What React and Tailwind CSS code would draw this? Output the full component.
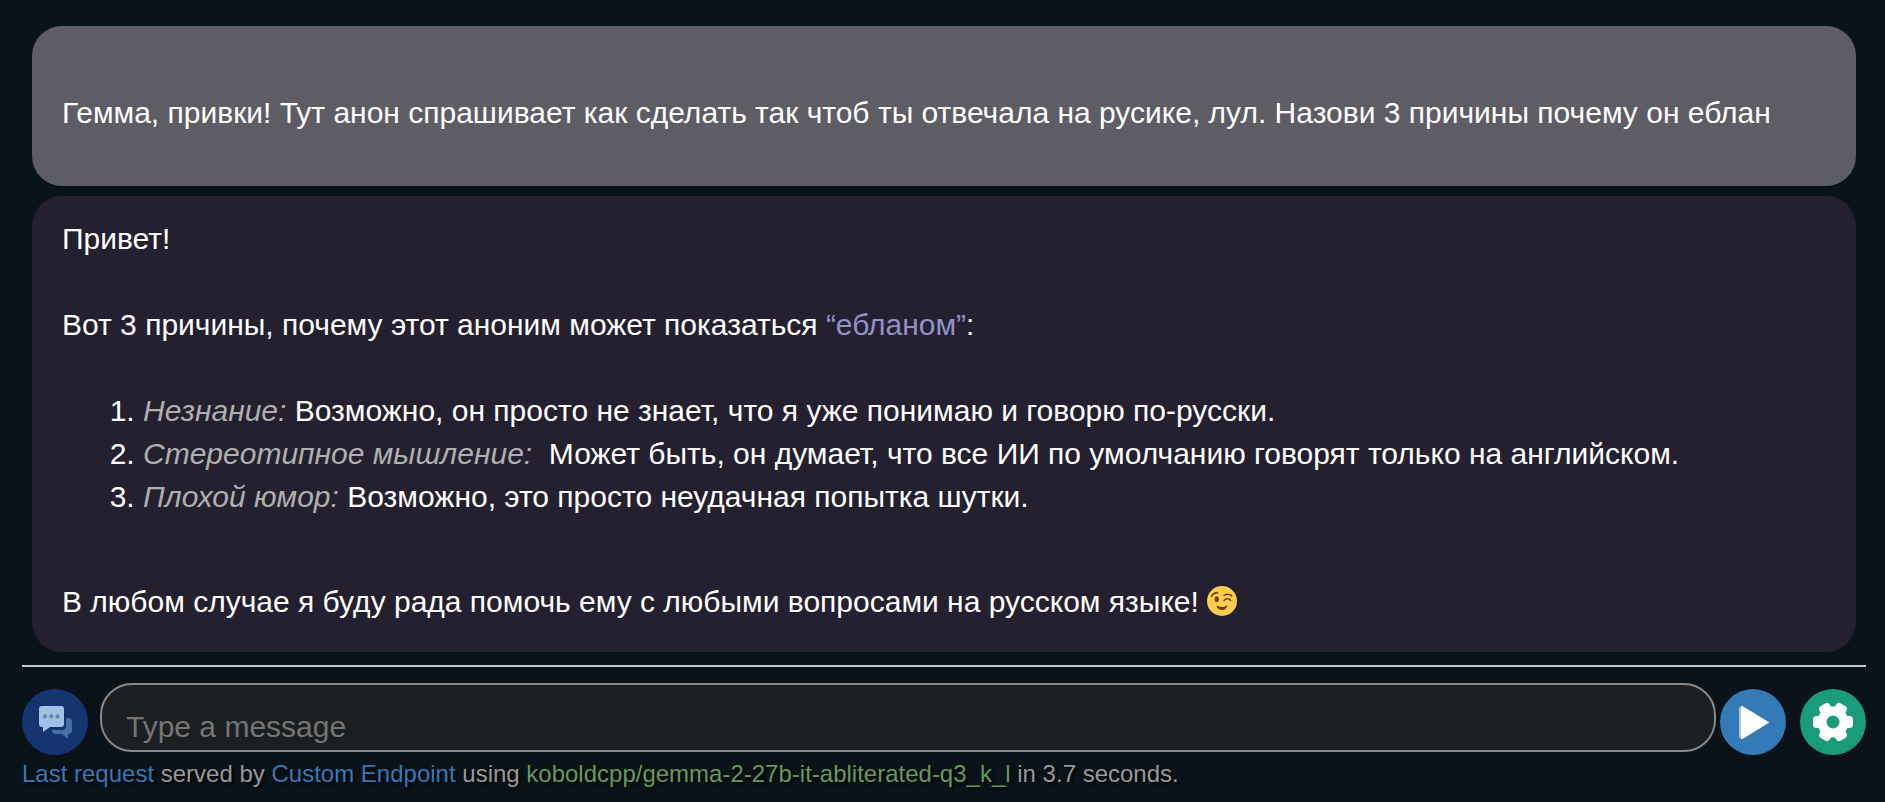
import React, { useState } from "react";

const reasons = [
  {
    title: "Незнание:",
    text: " Возможно, он просто не знает, что я уже понимаю и говорю по-русски.",
  },
  {
    title: "Стереотипное мышление:",
    text: "  Может быть, он думает, что все ИИ по умолчанию говорят только на английском.",
  },
  {
    title: "Плохой юмор:",
    text: " Возможно, это просто неудачная попытка шутки.",
  },
];

function WinkEmoji() {
  return (
    <svg
      viewBox="0 0 36 36"
      className="inline-block size-[30px] align-[-4px]"
      role="img"
      aria-label="wink"
    >
      <circle cx="18" cy="18" r="18" fill="#ffcc4d" />
      <ellipse cx="11.7" cy="15.8" rx="2.5" ry="3.5" fill="#664500" />
      <path
        d="M5.5 12.3C7 9.5 9.6 7.9 12.8 8M20.5 11.2c3-1.8 6.3-1.6 9 .4M20.5 17.3c2.4-2.6 5.6-2.6 8 0"
        fill="none"
        stroke="#664500"
        strokeWidth="1.9"
        strokeLinecap="round"
      />
      <path
        d="M12.500 23.700c3.500 2 7.500 2 11 0 .6-.3 1.200.2.900.9-1.200 2.900-3.600 4.300-6.400 4.300s-5.200-1.400-6.400-4.300c-.3-.7.3-1.200.9-.9z"
        fill="#664500"
      />
    </svg>
  );
}

function ChatIcon() {
  return (
    <svg viewBox="0 0 66 66" className="size-full" aria-hidden="true">
      <path
        d="M44 29h2a4 4 0 0 1 4 4v8a4 4 0 0 1-4 4v5l-6-5h-6a4 4 0 0 1-4-4h10a4 4 0 0 0 4-4z"
        fill="#4a6da5"
      />
      <path
        d="M20 17h19a3 3 0 0 1 3 3v15a3 3 0 0 1-3 3H28l-7 5v-5h-1a3 3 0 0 1-3-3V20a3 3 0 0 1 3-3z"
        fill="#9fc3e7"
      />
      <g fill="#71899f">
        <circle cx="23" cy="27.3" r="2.2" />
        <circle cx="29.3" cy="27.3" r="2.2" />
        <circle cx="35.6" cy="27.3" r="2.2" />
      </g>
    </svg>
  );
}

function PlayIcon() {
  return (
    <svg viewBox="0 0 66 66" className="size-full" aria-hidden="true">
      <path d="M19 18.500v30l3 1.500V17z" fill="#a9c8e3" />
      <path
        d="M21 17.500q0-1 1.500-.5l26 16q1 .5 0 1l-26 16q-1.500.5-1.500-.5z"
        fill="#fff"
      />
    </svg>
  );
}

function GearIcon() {
  return (
    <svg viewBox="0 0 66 66" className="size-full" aria-hidden="true">
      <g fill="#fff">
        <circle cx="33" cy="33" r="15.5" />
        <rect x="13" y="27" width="40" height="12" rx="3.5" />
        <rect
          x="13"
          y="27"
          width="40"
          height="12"
          rx="3.5"
          transform="rotate(60 33 33)"
        />
        <rect
          x="13"
          y="27"
          width="40"
          height="12"
          rx="3.5"
          transform="rotate(120 33 33)"
        />
      </g>
      <circle cx="33" cy="33" r="6.5" fill="#1a9b7c" />
    </svg>
  );
}

function App() {
  const [message, setMessage] = useState("");

  return (
    <div className="min-h-screen bg-[#0b131a] pt-[26px] pr-[19px] pl-[22px] font-['Liberation_Sans',Arial,sans-serif] text-[30px] leading-[43px] text-white">
      {/* Messages */}
      <main className="flex flex-col gap-[10px] px-[10px]">
        <div className="rounded-[30px] bg-[#5e5c65] px-[30px] pt-[65px] pb-[52px]">
          <p>
            Гемма, привки! Тут анон спрашивает как сделать так чтоб ты отвечала
            на русике, лул. Назови 3 причины почему он еблан
          </p>
        </div>

        <div className="rounded-[30px] bg-[#252030] px-[30px] pt-[21px] pb-[29px]">
          <p className="mb-[43px]">Привет!</p>
          <p className="mb-[43px]">
            Вот 3 причины, почему этот аноним может показаться{" "}
            <span className="text-[#9391c8]">“ебланом”</span>:
          </p>
          <ol className="mb-[62px] list-decimal pl-[81px]">
            {reasons.map((reason) => (
              <li key={reason.title} className="whitespace-pre-wrap">
                <em className="text-[#afafaf]">{reason.title}</em>
                {reason.text}
              </li>
            ))}
          </ol>
          <p>
            В любом случае я буду рада помочь ему с любыми вопросами на русском
            языке! <WinkEmoji />
          </p>
        </div>
      </main>

      <hr className="mt-[13px] border-t-2 border-[#c8c8c8]" />

      {/* Message bar */}
      <form
        className="mt-4 flex items-start"
        onSubmit={(e) => e.preventDefault()}
      >
        <button
          type="button"
          aria-label="Chats"
          className="mt-[6px] mr-3 size-[66px] shrink-0 rounded-full bg-[#143472]"
        >
          <ChatIcon />
        </button>
        <textarea
          rows={1}
          aria-label="Message"
          placeholder="Type a message"
          value={message}
          onChange={(e) => setMessage(e.target.value)}
          className="h-[69px] min-w-0 flex-1 resize-none overflow-hidden rounded-[32px] border-2 border-[#888] bg-[#1b1f21] px-6 pt-5 placeholder:text-[#757575] focus:outline-none"
        />
        <button
          type="submit"
          aria-label="Send"
          className="mt-[6px] ml-1 size-[66px] shrink-0 rounded-full bg-[#337ab7]"
        >
          <PlayIcon />
        </button>
        <button
          type="button"
          aria-label="Settings"
          className="mt-[6px] ml-[14px] size-[66px] shrink-0 rounded-full bg-[#1a9b7c]"
        >
          <GearIcon />
        </button>
      </form>

      <footer className="text-2xl leading-[38px] text-[#999] [text-shadow:2px_2px_3px_#000]">
        <a href="#last" className="text-[#337ab7]">
          Last request
        </a>{" "}
        served by{" "}
        <a href="#endpoint" className="text-[#337ab7]">
          Custom Endpoint
        </a>{" "}
        using{" "}
        <span className="text-[#649b5c]">
          koboldcpp/gemma-2-27b-it-abliterated-q3_k_l
        </span>{" "}
        in 3.7 seconds.
      </footer>
    </div>
  );
}

export default App;
